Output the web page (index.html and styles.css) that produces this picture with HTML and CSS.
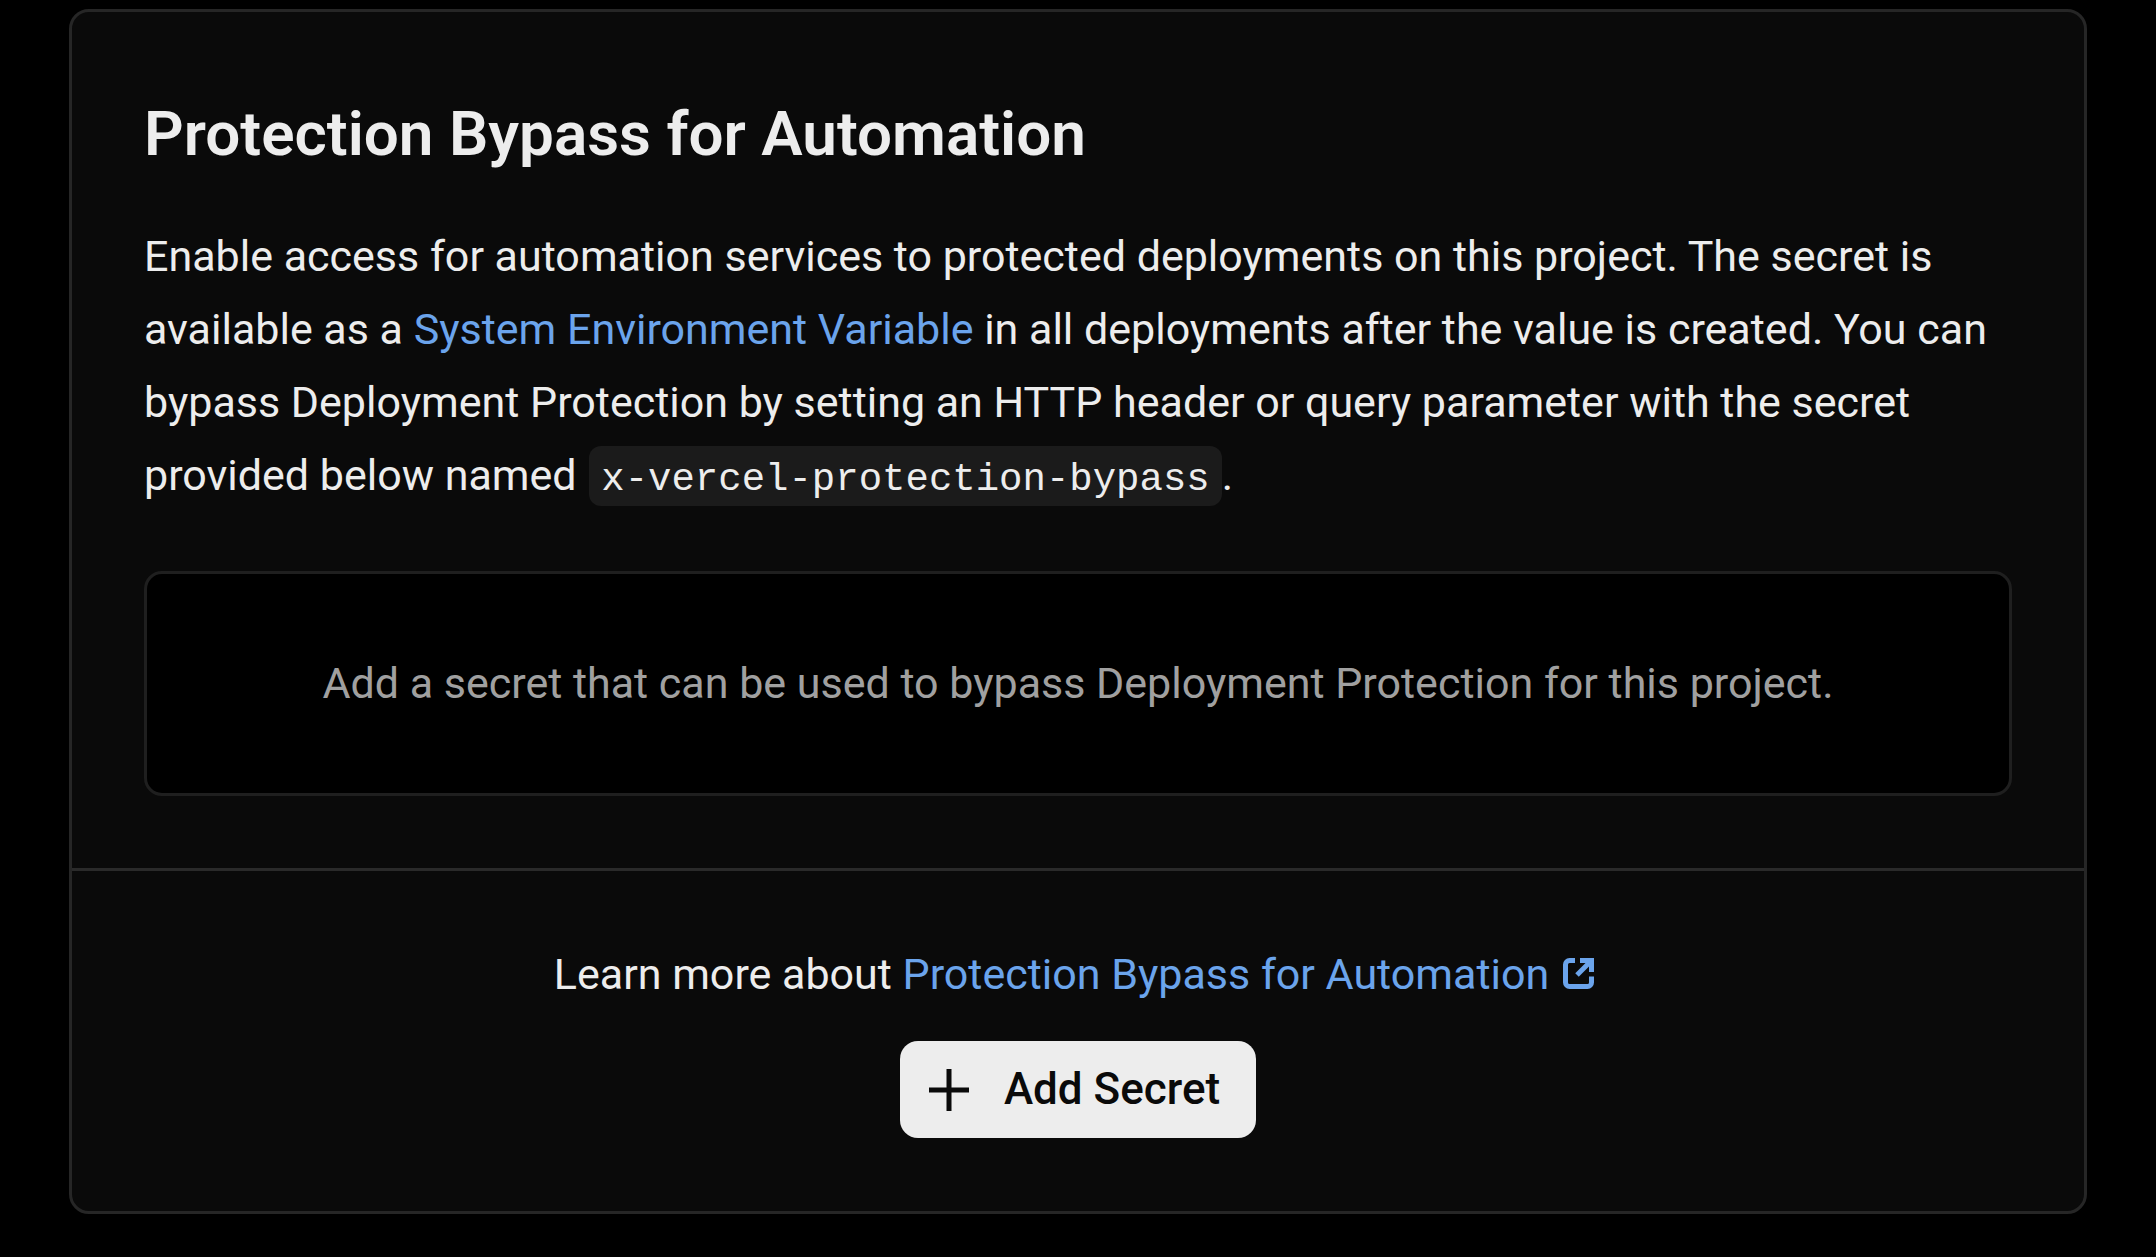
FILE: index.html
```
<!DOCTYPE html>
<html lang="en">
<head>
<meta charset="utf-8">
<meta name="viewport" content="width=device-width, initial-scale=1">
<title>Protection Bypass for Automation</title>
<link rel="stylesheet" href="styles.css">
</head>
<body>
<main class="page">
  <section class="card" aria-labelledby="card-title">
    <div class="card-body">
      <h2 class="card-title" id="card-title">Protection Bypass for Automation</h2>
      <p class="card-text">Enable access for automation services to protected deployments on this project. The secret is available as a <a class="link" href="#environment">System Environment Variable</a> in all deployments after the value is created. You can bypass Deployment Protection by setting an HTTP header or query parameter with the secret provided below named <code class="code">x-vercel-protection-bypass</code>.</p>
      <div class="empty">Add a secret that can be used to bypass Deployment Protection for this project.</div>
    </div>
    <footer class="card-footer">
      <p class="learn">Learn more about <a class="link" href="#bypass">Protection Bypass for Automation<svg class="external" viewBox="0 0 31 31" fill="none" stroke="currentColor" stroke-width="5" aria-hidden="true"><path d="M12 2.500H6.500a4 4 0 0 0-4 4v18a4 4 0 0 0 4 4h18a4 4 0 0 0 4-4V18.500"/><path d="M14 17 27 4"/><path d="M17 2.500h11.500v11.500"/></svg></a></p>
      <button class="button" type="button">
        <svg class="plus" viewBox="0 0 42 42" stroke="currentColor" stroke-width="5" aria-hidden="true"><path d="M21 0v42M1 21h40"/></svg>
        Add Secret
      </button>
    </footer>
  </section>
</main>
</body>
</html>
```
FILE: styles.css
```
* {
  box-sizing: border-box;
}

body {
  margin: 0;
  background: #000;
  color: #ededed;
  font-family: Roboto, "Liberation Sans", sans-serif;
  font-size: 43px;
  line-height: 73px;
}

.page {
  padding: 9px 69px 43px;
}

.card {
  border: 3px solid #262626;
  border-radius: 20px;
  background: #0a0a0a;
}

.card-body {
  padding: 72px;
}

.card-title {
  margin: 0 0 36px;
  font-size: 62px;
  font-weight: 600;
  line-height: 100px;
}

.card-text {
  margin: 0 0 59px;
}

.link {
  color: #6ba4ec;
  text-decoration: none;
}

.code {
  margin-left: 2px;
  padding: 12px 12px 4px;
  border-radius: 12px;
  background: #1b1b1b;
  font-family: "Liberation Mono", monospace;
  font-size: 39px;
  line-height: 40px;
}

.empty {
  padding: 73px 72px;
  border: 3px solid #1f1f1f;
  border-radius: 18px;
  background: #000;
  color: #a0a0a0;
  text-align: center;
}

.card-footer {
  display: flex;
  flex-direction: column;
  align-items: center;
  gap: 30px;
  padding: 67px 72px 73px;
  border-top: 3px solid #2a2a2a;
}

.learn {
  margin: 0;
}

.external {
  width: 31px;
  height: 31px;
  margin: 0 8px 0 14px;
}

.button {
  display: flex;
  align-items: center;
  gap: 34px;
  padding: 12px 36px 12px 28px;
  border: 0;
  border-radius: 18px;
  background: #ededed;
  color: #0a0a0a;
  font: inherit;
  font-size: 44px;
  font-weight: 500;
}

.plus {
  width: 42px;
  height: 42px;
}
```
